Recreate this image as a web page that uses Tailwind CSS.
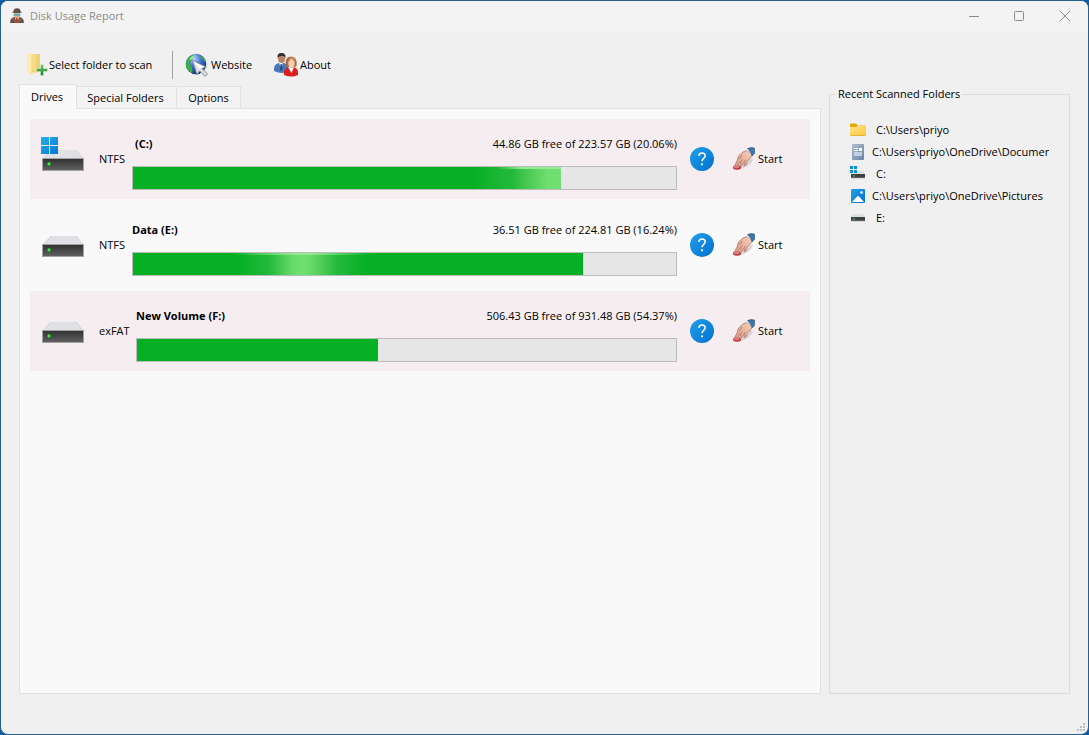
<!DOCTYPE html>
<html lang="en">
<head>
<meta charset="utf-8">
<title>Disk Usage Report</title>
<script src="https://cdn.jsdelivr.net/npm/@tailwindcss/browser@4"></script>
</head>
<body class="bg-[#0a5ea3] font-['Open_Sans','Noto_Sans',sans-serif] text-[11px] leading-4 text-black">

<!-- Shared icon artwork -->
<svg class="absolute size-0" aria-hidden="true">
  <defs>
    <linearGradient id="gDark" x1="0" y1="0" x2="0" y2="1"><stop offset="0" stop-color="#303030"/><stop offset="1" stop-color="#626262"/></linearGradient>
    <linearGradient id="gWin" x1="0" y1="0" x2="1" y2="1"><stop offset="0" stop-color="#2aaeea"/><stop offset="1" stop-color="#0078d4"/></linearGradient>
    <linearGradient id="gHelp" x1="0" y1="0" x2="1" y2="1"><stop offset="0" stop-color="#22a0ea"/><stop offset="1" stop-color="#0070d0"/></linearGradient>
    <linearGradient id="gFold" x1="0" y1="0" x2="1" y2="1"><stop offset="0" stop-color="#ffe391"/><stop offset="1" stop-color="#fcc83c"/></linearGradient>
    <linearGradient id="gFoldB" x1="0" y1="0" x2="1" y2="0"><stop offset="0" stop-color="#ffedb0"/><stop offset="1" stop-color="#f0cc68"/></linearGradient>
    <linearGradient id="gPlus" x1="0" y1="0" x2="0" y2="1"><stop offset="0" stop-color="#75c56f"/><stop offset="1" stop-color="#16811d"/></linearGradient>
    <linearGradient id="gDoc" x1="0" y1="0" x2="1" y2="1"><stop offset="0" stop-color="#aebfd2"/><stop offset="1" stop-color="#6684a6"/></linearGradient>
    <linearGradient id="gHand" x1="1" y1="0" x2="0" y2="1"><stop offset="0" stop-color="#f8d5bd"/><stop offset="1" stop-color="#d59880"/></linearGradient>
    <radialGradient id="gGlobe" cx=".4" cy=".25" r=".8"><stop offset="0" stop-color="#b8d4ff"/><stop offset=".45" stop-color="#3d6fd0"/><stop offset="1" stop-color="#0a2775"/></radialGradient>
    <symbol id="drive" viewBox="0 0 44 36">
      <path d="M10 13h25l8 10H1z" fill="#dfe1e5"/>
      <path d="M35 13l8 10M10 13L1 23" stroke="#cfd1d4" stroke-width="1"/>
      <rect x="1.500" y="21.500" width="41" height="12" fill="url(#gDark)" stroke="#a2a2a2"/>
      <circle cx="8" cy="27" r="2.300" fill="#15812a"/><circle cx="8" cy="27" r="1.400" fill="#4be44a"/>
    </symbol>
    <symbol id="win" viewBox="0 0 17 17"><path d="M0 0h8v8H0zM9 0h8v8H9zM0 9h8v8H0zM9 9h8v8H9z" fill="url(#gWin)"/></symbol>
    <symbol id="help" viewBox="0 0 24 24">
      <circle cx="12" cy="12" r="12" fill="url(#gHelp)"/>
      <path d="M8.900 8.900C9 7 10.200 5.900 12 5.900s3.200 1.100 3.200 2.800c0 2.600-3.200 2.800-3.200 5.500" fill="none" stroke="#fff" stroke-width="1.500"/>
      <circle cx="12" cy="17.300" r="1.100" fill="#fff"/>
    </symbol>
    <symbol id="hand" viewBox="0 0 24 24">
      <path d="M9 20q7-1 11-8" stroke="#cbbfc1" stroke-width="3" fill="none" opacity=".6"/>
      <ellipse cx="5" cy="20.500" rx="4" ry="2.200" fill="#b92d35"/><ellipse cx="4.500" cy="19.700" rx="3" ry="1.500" fill="#ed7880"/>
      <path d="M15 3.500L11 5 6.500 9 5 14l-2 4q0 2 2 1.500l3-4 1 .5-1.500 3q1 1.200 2-.2l2-3 1 .2-.7 2.500q1.200.8 2-.5l1.500-3.500L18 11l3-3z" fill="url(#gHand)" stroke="#ad7465" stroke-width=".8"/>
      <path d="M8 15.500l2.500-3M11.500 16l2-3M10 8l-2.500 4" stroke="#ad7465" stroke-width=".8" fill="none"/>
      <path d="M13.500 2.500l2-1.500 6 5.500-1.500 3q-1-4-6.500-7z" fill="#f7f5f5"/>
      <path d="M15.500 1.500Q19 0 22.500 1v5.500L20 9q-1-4.500-4.500-7.500z" fill="#3f74ab" stroke="#24557f" stroke-width=".6"/>
    </symbol>
  </defs>
</svg>

<div class="flex min-h-screen flex-col overflow-hidden rounded-lg border border-[#23608f] bg-[#f0f0f0]">

  <header class="flex h-[30px] items-center bg-[#f3f3f3] pl-2 text-[#8b8b8b]">
    <svg class="mr-[5px] size-4" viewBox="0 0 16 16" aria-hidden="true">
      <path d="M1 15q0-5 4-6h6q4 1 4 6z" fill="#756050"/><path d="M5.500 8.500L8 15l2.500-6.500z" fill="#e2c7ac"/><path d="M7.300 9.500h1.400l.7 5.500H6.600z" fill="#c43a2c"/>
      <rect x="5" y="3" width="6" height="6.500" rx="2.500" fill="#d8aa85"/><path d="M4.500 6h7v1.800h-7z" fill="#5cabc6"/>
      <path d="M3 4.500Q5 3.500 5.200 1q2.800-1.600 5.600 0 .2 2.500 2.200 3.500-5 1.200-10 0z" fill="#5b554b"/><path d="M2 12l3 3M14 12l-3 3" stroke="#3e3933"/>
    </svg>
    <h1 class="flex-1 text-[11px]">Disk Usage Report</h1>
    <button class="flex h-full w-[45px] items-center justify-center" aria-label="Minimize"><svg class="size-3" viewBox="0 0 12 12"><path d="M1 6.500h10" stroke="#8b8b8b"/></svg></button>
    <button class="flex h-full w-[46px] items-center justify-center" aria-label="Maximize"><svg class="size-3" viewBox="0 0 12 12"><rect x="1.500" y="1.500" width="9" height="9" rx="1" fill="none" stroke="#8b8b8b"/></svg></button>
    <button class="flex h-full w-[46px] items-center justify-center" aria-label="Close"><svg class="size-3" viewBox="0 0 12 12"><path d="M1 1l10 10M11 1L1 11" stroke="#8b8b8b"/></svg></button>
  </header>

  <div class="flex flex-1 gap-2 pr-[18px] pb-10 pl-[18px]">
    <main class="flex min-w-0 flex-1 flex-col">
      <nav class="mt-[18px] flex h-[30px] items-center pt-0.5 pl-1.5" aria-label="Toolbar">
        <button class="flex w-[147px] items-center">
          <svg class="size-6 shrink-0" viewBox="0 0 24 24" aria-hidden="true">
            <path d="M5 1h10v18H5z" fill="#efcf79"/><path d="M3 1h11v18l-5 1z" fill="url(#gFoldB)"/><path d="M2 1l5 3v18l-5-3z" fill="#ffebac"/><path d="M7 4v18" stroke="#e8c768" stroke-width=".7"/>
            <path d="M15.500 11.500h3v4h4v3h-4v4h-3v-4h-4v-3h4z" fill="url(#gPlus)" stroke="#f5faf3" stroke-width=".4"/>
          </svg>
          <span>Select folder to scan</span>
        </button>
        <span class="h-7 border-l border-[#a0a0a0]"></span>
        <button class="ml-3 flex w-[89px] items-center">
          <svg class="mr-0.5 size-6 shrink-0" viewBox="0 0 24 24" aria-hidden="true">
            <circle cx="11" cy="11" r="10.300" fill="url(#gGlobe)"/>
            <path d="M1.500 8q2-5 6-6l2 1-1 2-3 1 1 2-3 2 3 3 1 4 0 3q-4-1-6-5-1-3 0-7zM14 2q5 2 7 7l-2-1-3-3z" fill="#3cb043"/>
            <path d="M4 7q2-4 6-5l-2 3z" fill="#a8eda5"/>
            <path d="M7.500 7.500l14 6.500-4.500 1.500 5.500 5.500-2.500 2.500-5.500-5.500-2.500 4z" fill="#d9dde0" stroke="#777f86" stroke-width=".8"/><path d="M8 8l11 6-5 2z" fill="#fff"/>
          </svg>
          <span>Website</span>
        </button>
        <button class="flex items-center">
          <svg class="mr-0.5 size-6 shrink-0" viewBox="0 0 24 24" aria-hidden="true">
            <path d="M0 18q-.5-7 5-8h5q5 1 5 8-6 4-15 0z" fill="#4878b9"/><path d="M5 9h4l-2 8z" fill="#fff"/><path d="M6.500 11h1.200l.8 5-1.500 2-1-2z" fill="#214783"/>
            <ellipse cx="7.500" cy="5.500" rx="3.500" ry="4.500" fill="#b98565"/><path d="M3.500 5Q3 0 7.500 0t4 5q-2-3-4-2-3 0-4 2z" fill="#342b27"/>
            <path d="M10 22q-1-7 5-8h4q6 1 5 8-6 3-14 0z" fill="#da2020"/><path d="M14 14h6l-2.500 6z" fill="#fff"/>
            <path d="M12 13q-2-9 5-9.500 7 .5 5.500 9.500-5 3-10.500 0z" fill="#a96b42"/><ellipse cx="17.500" cy="10" rx="3.200" ry="4.500" fill="#f6ceb0"/><path d="M13.500 9q3-1 4-4 1 3 4 4l-1-4-4-1z" fill="#c68a5c"/>
          </svg>
          <span>About</span>
        </button>
      </nav>

      <div class="mt-[5px] flex items-end" role="tablist">
        <button role="tab" aria-selected="true" class="relative -mb-px h-[25px] w-[58px] border border-b-0 border-[#e2e2e2] bg-[#f9f9f9] pr-0.5">Drives</button>
        <button role="tab" aria-selected="false" class="h-[22px] w-[100px] border-t border-r border-[#e2e2e2] bg-[#f3f3f3] pr-0.5">Special Folders</button>
        <button role="tab" aria-selected="false" class="h-[22px] w-[64px] border-t border-r border-[#e2e2e2] bg-[#f3f3f3]">Options</button>
      </div>

      <section class="flex flex-1 flex-col gap-1.5 border border-[#e2e2e2] bg-[#f9f9f9] p-2.5" role="tabpanel">

        <article class="flex h-20 items-center bg-[#f6edf0] pr-7 pl-[11px]">
          <span class="relative mr-3.5 mb-2 block h-9 w-11">
            <svg class="size-full" aria-label="System drive"><use href="#drive"/></svg>
            <svg class="absolute top-0 left-0 size-[17px]"><use href="#win"/></svg>
          </span>
          <span class="mr-1.5 min-w-[27px]">NTFS</span>
          <div class="flex min-w-0 flex-1 flex-col gap-[14px] pt-2">
            <div class="flex justify-between"><strong class="pl-[3px]">(C:)</strong><span>44.86 GB free of 223.57 GB (20.06%)</span></div>
            <div class="h-6 border border-[#bcbcbc] bg-[#e6e6e6]" role="progressbar" aria-label="C: used space" aria-valuenow="80">
              <div class="h-full bg-linear-to-r from-[#06b025] from-80% via-[#24ba3c] via-89% to-[#70df72] to-97%" style="width:78.9%"><div class="ml-[85%] h-0.5 bg-linear-to-r from-transparent to-[#93ec92] to-40%"></div></div>
            </div>
          </div>
          <button class="ml-[13px] size-6" aria-label="Help"><svg class="size-6"><use href="#help"/></svg></button>
          <button class="ml-[18px] flex w-[50px] items-center"><svg class="mr-0.5 size-6 shrink-0"><use href="#hand"/></svg><span>Start</span></button>
        </article>

        <article class="flex h-20 items-center pr-7 pl-[11px]">
          <svg class="mr-3.5 mb-2 h-9 w-11" aria-label="Drive"><use href="#drive"/></svg>
          <span class="mr-1.5 min-w-[27px]">NTFS</span>
          <div class="flex min-w-0 flex-1 flex-col gap-[14px] pt-2">
            <div class="flex justify-between"><strong>Data (E:)</strong><span>36.51 GB free of 224.81 GB (16.24%)</span></div>
            <div class="h-6 border border-[#bcbcbc] bg-[#e6e6e6]" role="progressbar" aria-label="E: used space" aria-valuenow="84">
              <div class="h-full bg-[#06b025]" style="width:82.9%"><div class="ml-[22%] h-full w-[31%] bg-[linear-gradient(90deg,#06b025_5%,#24ba3c_27%,#66d96a_43%,#70df72_50%,#66d96a_57%,#24ba3c_75%,#06b025_95%)]"><div class="h-0.5 bg-linear-to-r from-transparent via-[#93ec92] to-transparent"></div></div></div>
            </div>
          </div>
          <button class="ml-[13px] size-6" aria-label="Help"><svg class="size-6"><use href="#help"/></svg></button>
          <button class="ml-[18px] flex w-[50px] items-center"><svg class="mr-0.5 size-6 shrink-0"><use href="#hand"/></svg><span>Start</span></button>
        </article>

        <article class="flex h-20 items-center bg-[#f6edf0] pr-7 pl-[11px]">
          <svg class="mr-3.5 mb-2 h-9 w-11" aria-label="Drive"><use href="#drive"/></svg>
          <span class="mr-1.5 min-w-[31px]">exFAT</span>
          <div class="flex min-w-0 flex-1 flex-col gap-[14px] pt-2">
            <div class="flex justify-between"><strong>New Volume (F:)</strong><span>506.43 GB free of 931.48 GB (54.37%)</span></div>
            <div class="h-6 border border-[#bcbcbc] bg-[#e6e6e6]" role="progressbar" aria-label="F: used space" aria-valuenow="46">
              <div class="h-full bg-[#06b025]" style="width:44.8%"></div>
            </div>
          </div>
          <button class="ml-[13px] size-6" aria-label="Help"><svg class="size-6"><use href="#help"/></svg></button>
          <button class="ml-[18px] flex w-[50px] items-center"><svg class="mr-0.5 size-6 shrink-0"><use href="#hand"/></svg><span>Start</span></button>
        </article>
      </section>
    </main>

    <fieldset class="mt-[55px] w-[241px] min-w-0 shrink-0 border border-[#dcdcdc] pr-5 pl-5">
      <legend class="-ml-[14px] px-0.5">Recent Scanned Folders</legend>
      <ul class="mt-[17px]">
        <li><button class="flex h-[22px] w-full items-center overflow-hidden whitespace-nowrap">
          <svg class="mr-2.5 size-4 shrink-0" viewBox="0 0 16 16"><path d="M0 2.500q0-1 1-1h5l2 2h7q1 0 1 1V7H0z" fill="#e9a900"/><path d="M0 5h6l2-1.500h7q1 0 1 1V13q0 1-1 1H1q-1 0-1-1z" fill="url(#gFold)"/><path d="M.5 13.500h15" stroke="#e3ac26" stroke-width=".8"/></svg>C:\Users\priyo</button></li>
        <li><button class="flex h-[22px] w-full items-center overflow-hidden whitespace-nowrap">
          <svg class="mr-1.5 size-4 shrink-0" viewBox="0 0 16 16"><rect x="2" width="12" height="16" rx="1" fill="url(#gDoc)"/><path d="M4 4.500h4M4 6.500h4M4 9h8M4 11h8" stroke="#fff"/><path d="M9 4h3v3H9z" fill="#fff"/></svg>C:\Users\priyo\OneDrive\Documents</button></li>
        <li><button class="flex h-[22px] w-full items-center overflow-hidden whitespace-nowrap">
          <svg class="mr-2.5 size-4 shrink-0" viewBox="0 0 16 16"><path d="M3 5h10l2 3H1z" fill="#dcdfe3"/><path d="M1 8h14v4H1z" fill="#404040"/><path d="M1 12h14" stroke="#aaa" stroke-width=".6"/><path d="M3 9.500h2v1H3z" fill="#43dd4d"/><path d="M0 0h3v3H0zM4 0h3v3H4zM0 4h3v3H0zM4 4h3v3H4z" fill="#098fd9"/></svg>C:</button></li>
        <li><button class="flex h-[22px] w-full items-center overflow-hidden whitespace-nowrap">
          <svg class="mr-1.5 size-4 shrink-0" viewBox="0 0 16 16"><rect x="1" y="1" width="14" height="14" rx="1" fill="url(#gHelp)"/><path d="M2 14l5-5.500q1-1 2 0l5 5.500z" fill="#fff"/><circle cx="11.500" cy="4.500" r="1.300" fill="#fff"/></svg>C:\Users\priyo\OneDrive\Pictures</button></li>
        <li><button class="flex h-[22px] w-full items-center overflow-hidden whitespace-nowrap">
          <svg class="mr-2.5 size-4 shrink-0" viewBox="0 0 16 16"><path d="M3 4h10l2 3H1z" fill="#dcdfe3"/><path d="M1 7h14v4H1z" fill="#404040"/><path d="M1 11h14" stroke="#aaa" stroke-width=".6"/><path d="M3 8.500h2v1H3z" fill="#43dd4d"/></svg>E:</button></li>
      </ul>
    </fieldset>
  </div>

  <svg class="absolute right-1 bottom-1 size-2" viewBox="0 0 8 8" aria-hidden="true"><path d="M6 0h2v2H6zM3 3h2v2H3zM6 3h2v2H6zM0 6h2v2H0zM3 6h2v2H3zM6 6h2v2H6z" fill="#bfbfbf"/></svg>
</div>
</body>
</html>
